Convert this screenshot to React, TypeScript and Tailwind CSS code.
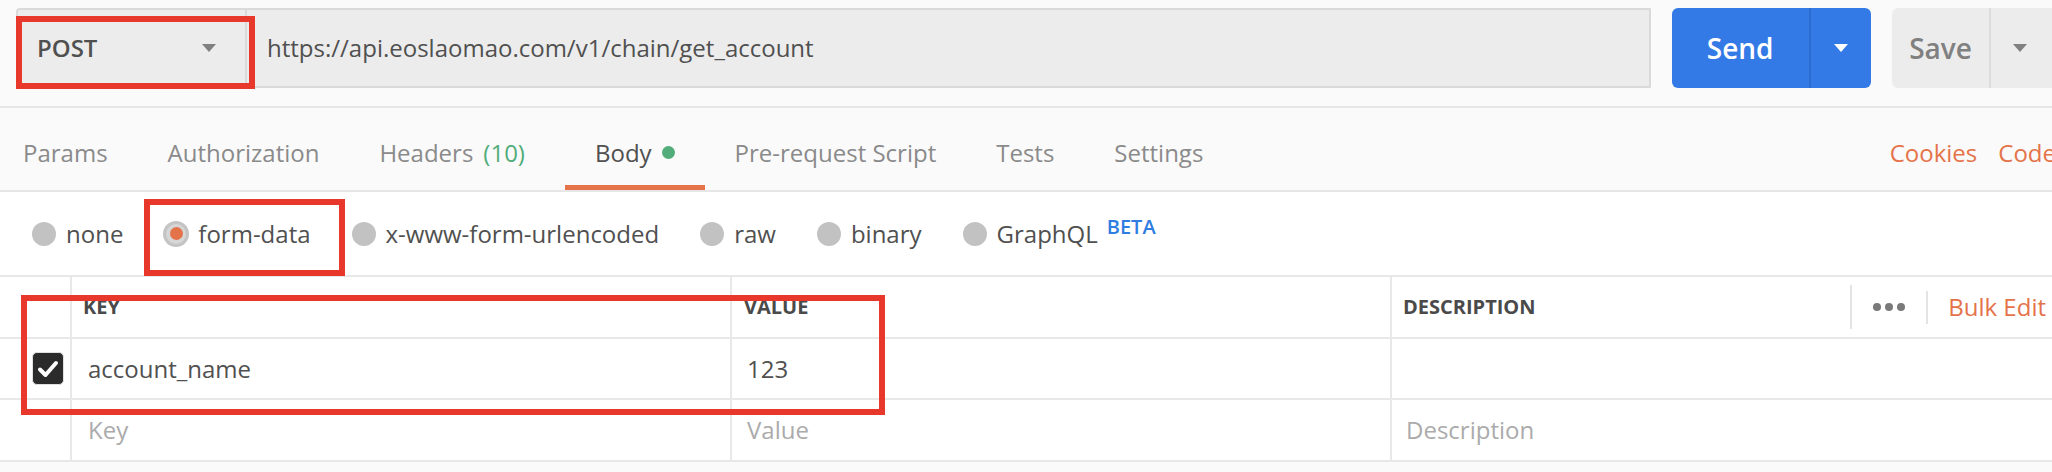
import React from 'react';

const tabs = [
  { label: 'Params' },
  { label: 'Authorization' },
  { label: 'Headers', count: '(10)' },
  { label: 'Body', active: true },
  { label: 'Pre-request Script' },
  { label: 'Tests' },
  { label: 'Settings' },
];

const bodyModes = ['none', 'form-data', 'x-www-form-urlencoded', 'raw', 'binary', 'GraphQL'];

const Caret: React.FC<{ color: string }> = ({ color }) => (
  <svg width="16" height="10" viewBox="0 0 16 10">
    <polygon points="1,1 15,1 8,9" fill={color} />
  </svg>
);

const Radio: React.FC<{ selected?: boolean }> = ({ selected }) =>
  selected ? (
    <span className="w-[26px] h-[26px] -mx-[1px] rounded-full bg-[#c4c4c4] flex items-center justify-center shrink-0">
      <span className="w-[20px] h-[20px] rounded-full bg-[#d6d6d6] flex items-center justify-center">
        <span className="w-[13px] h-[13px] rounded-full bg-[#e5734a]" />
      </span>
    </span>
  ) : (
    <span className="w-[24px] h-[24px] rounded-full bg-[#c2c2c2] shrink-0" />
  );

export default function App() {
  return (
    <div className="relative w-[2052px] h-[472px] overflow-hidden bg-[#fafafa] font-['Open_Sans',sans-serif] text-[#505050]">
      {/* request bar */}
      <div className="h-[108px] border-b-2 border-[#e6e6e6] pl-[16px] pt-[8px] flex gap-[21px]">
        <div className="w-[1640px] h-[80px] flex bg-[#ececec] border-2 border-[#dadada] rounded-l-[4px]">
          <div className="w-[229px] flex items-center justify-between pl-[19px] pr-[28px] border-r-2 border-[#dadada]">
            <span className="text-[24px] font-semibold">POST</span>
            <Caret color="#808080" />
          </div>
          <div className="flex items-center pl-[20px] text-[24px]">
            https://api.eoslaomao.com/v1/chain/get_account
          </div>
        </div>
        <div className="w-[200px] h-[80px] flex bg-[#347ae6] rounded-[6px] text-white">
          <div className="w-[139px] flex items-center justify-center text-[28px] font-semibold border-r-2 border-[#2c6bd0]">
            Send
          </div>
          <div className="flex-1 flex items-center justify-center">
            <Caret color="#ffffff" />
          </div>
        </div>
        <div className="w-[160px] h-[80px] shrink-0 flex bg-[#ececec] rounded-l-[6px] text-[#808080]">
          <div className="w-[99px] flex items-center justify-center text-[28px] font-semibold border-r-2 border-[#dcdcdc]">
            Save
          </div>
          <div className="w-[58px] flex items-center justify-center">
            <Caret color="#808080" />
          </div>
        </div>
      </div>

      {/* tabs */}
      <div className="h-[84px] border-b-2 border-[#e6e6e6] flex items-stretch text-[24px]">
        <div className="flex -ml-[7px]">
          {tabs.map((t) => (
            <div
              key={t.label}
              className={`px-[30px] pt-[12px] flex items-center gap-[10px] border-b-[5px] ${
                t.count ? 'mr-[10px]' : ''
              } ${t.active ? 'border-[#e5734a] text-[#505050]' : 'border-transparent text-[#8a8a8a]'}`}
            >
              <span>{t.label}</span>
              {t.count && <span className="text-[#52ad7a]">{t.count}</span>}
              {t.active && <span className="w-[13px] h-[13px] rounded-full bg-[#52ad7a]" />}
            </div>
          ))}
        </div>
        <div className="ml-auto -mr-[4px] flex items-center gap-[21px] text-[#e5734a] pt-[7px]">
          <span>Cookies</span>
          <span>Code</span>
        </div>
      </div>

      {/* body modes */}
      <div className="h-[85px] bg-white border-b-2 border-[#e8e8e8] flex items-center pl-[32px] gap-[41px] text-[24px]">
        {bodyModes.map((m) => (
          <div key={m} className="flex items-center gap-[10px]">
            <Radio selected={m === 'form-data'} />
            <span>{m}</span>
            {m === 'GraphQL' && (
              <span className="self-start -mt-[4px] -ml-[1px] text-[20px] font-semibold text-[#2f7de1]">BETA</span>
            )}
          </div>
        ))}
      </div>

      {/* key value table */}
      <div className="bg-white">
        <div className="h-[62px] flex border-b-2 border-[#e8e8e8] text-[20px] font-bold text-[#4a4a4a]">
          <div className="w-[72px] border-r-2 border-[#e8e8e8]" />
          <div className="w-[660px] border-r-2 border-[#e8e8e8] flex items-center pl-[11px]">KEY</div>
          <div className="w-[660px] border-r-2 border-[#e8e8e8] flex items-center pl-[12px]">VALUE</div>
          <div className="flex-1 flex items-center pl-[11px]">
            <span>DESCRIPTION</span>
            <div className="ml-auto flex items-center h-full">
              <div className="w-[2px] h-[44px] bg-[#e4e4e4]" />
              <div className="flex gap-[4px] px-[21px]">
                <span className="w-[8px] h-[8px] rounded-full bg-[#7a7a7a]" />
                <span className="w-[8px] h-[8px] rounded-full bg-[#7a7a7a]" />
                <span className="w-[8px] h-[8px] rounded-full bg-[#7a7a7a]" />
              </div>
              <div className="w-[2px] h-[33px] bg-[#e4e4e4]" />
              <span className="pl-[20px] pr-[6px] text-[24px] font-normal text-[#e5734a]">Bulk Edit</span>
            </div>
          </div>
        </div>
        <div className="h-[61px] flex border-b-2 border-[#e8e8e8] text-[24px]">
          <div className="w-[72px] border-r-2 border-[#e8e8e8] flex items-center pl-[32px]">
            <span className="w-[32px] h-[33px] shrink-0 rounded-[5px] bg-[#2b2b2b] border border-[#e0e0e0] flex items-center justify-center">
              <svg width="22" height="18" viewBox="0 0 22 18">
                <path d="M3 9.5 L8.5 15 L19 3" fill="none" stroke="#ffffff" strokeWidth="4" strokeLinecap="round" strokeLinejoin="round" />
              </svg>
            </span>
          </div>
          <div className="w-[660px] border-r-2 border-[#e8e8e8] flex items-center pl-[16px]">account_name</div>
          <div className="w-[660px] border-r-2 border-[#e8e8e8] flex items-center pl-[15px]">123</div>
          <div className="flex-1" />
        </div>
        <div className="h-[62px] flex border-b-2 border-[#e8e8e8] text-[24px] text-[#ababab]">
          <div className="w-[72px] border-r-2 border-[#e8e8e8]" />
          <div className="w-[660px] border-r-2 border-[#e8e8e8] flex items-center pl-[16px]">Key</div>
          <div className="w-[660px] border-r-2 border-[#e8e8e8] flex items-center pl-[15px]">Value</div>
          <div className="flex-1 flex items-center pl-[14px]">Description</div>
        </div>
      </div>

      {/* red annotation boxes */}
      <div className="absolute left-[16px] top-[16px] w-[239px] h-[73px] border-[6px] border-[#e8382b]" />
      <div className="absolute left-[144px] top-[199px] w-[201px] h-[77px] border-[6px] border-[#e8382b]" />
      <div className="absolute left-[21px] top-[295px] w-[864px] h-[120px] border-[6px] border-[#e8382b]" />
    </div>
  );
}
